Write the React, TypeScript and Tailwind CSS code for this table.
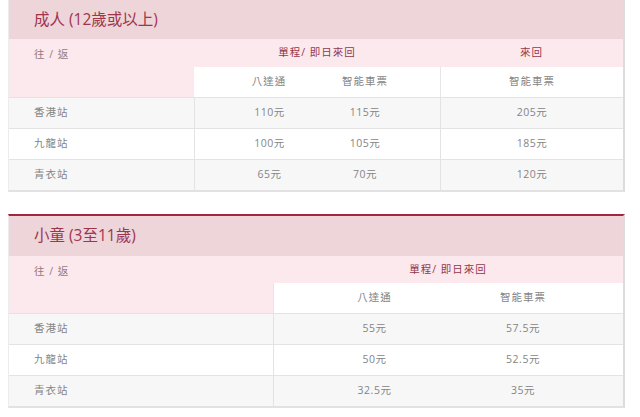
import React from 'react'

interface FareRow {
  station: string
  prices: string[]
}

const adultRows: FareRow[] = [
  { station: '香港站', prices: ['110元', '115元', '205元'] },
  { station: '九龍站', prices: ['100元', '105元', '185元'] },
  { station: '青衣站', prices: ['65元', '70元', '120元'] },
]

const childRows: FareRow[] = [
  { station: '香港站', prices: ['55元', '57.5元'] },
  { station: '九龍站', prices: ['50元', '52.5元'] },
  { station: '青衣站', prices: ['32.5元', '35元'] },
]

function Title({ text, tall }: { text: string; tall?: boolean }) {
  return (
    <div
      className={
        'bg-[#edd5da] flex items-center pl-[25px] text-[15.5px] text-[#a0344d] ' +
        (tall ? 'h-[40px]' : 'h-[39px]')
      }
    >
      {text}
    </div>
  )
}

export default function App() {
  return (
    <div className="w-[640px] h-[417px] overflow-hidden bg-white pl-2 font-['Open_Sans','Noto_Sans_CJK_TC',sans-serif]">
      {/* 成人 */}
      <div className="w-[617px] border-l border-[#ececec] border-r-2 border-b-2 border-r-[#dcdcdc] border-b-[#e2e2e2]">
        <Title text="成人 (12歲或以上)" />
        <div className="grid grid-cols-[185px_123px_123px_1fr] text-[10.5px] tracking-[1px]">
          <div className="row-span-2 bg-[#fbe9ed] pl-[25px] pt-[8px] text-[#947a80]">往 / 返</div>
          <div className="col-span-2 h-[28px] bg-[#fbe9ed] flex items-center justify-center text-[#94384e]">單程/ 即日來回</div>
          <div className="h-[28px] bg-[#fbe9ed] flex items-center justify-center text-[#94384e]">來回</div>
          <div className="h-[30px] bg-white flex items-center justify-center pl-[27px] text-[#858585]">八達通</div>
          <div className="h-[30px] bg-white flex items-center justify-center pr-[27px] text-[#858585]">智能車票</div>
          <div className="h-[30px] bg-white border-l border-[#e6e6e6] flex items-center justify-center text-[#858585]">智能車票</div>
          {adultRows.map((r, i) => (
            <React.Fragment key={r.station}>
              <div className={(i % 2 === 0 ? 'bg-[#f7f7f7] ' : 'bg-white ') + 'h-[31px] border-t border-[#e3e3e3] flex items-center pl-[25px] text-[#858585]'}>{r.station}</div>
              <div className={(i % 2 === 0 ? 'bg-[#f7f7f7] ' : 'bg-white ') + 'h-[31px] border-t border-l border-[#e3e3e3] flex items-center justify-center pl-[27px] text-[#858585] tracking-[0.5px]'}>{r.prices[0]}</div>
              <div className={(i % 2 === 0 ? 'bg-[#f7f7f7] ' : 'bg-white ') + 'h-[31px] border-t border-[#e3e3e3] flex items-center justify-center pr-[27px] text-[#858585] tracking-[0.5px]'}>{r.prices[1]}</div>
              <div className={(i % 2 === 0 ? 'bg-[#f7f7f7] ' : 'bg-white ') + 'h-[31px] border-t border-l border-[#e3e3e3] flex items-center justify-center text-[#858585] tracking-[0.5px]'}>{r.prices[2]}</div>
            </React.Fragment>
          ))}
        </div>
      </div>

      {/* 小童 */}
      <div className="mt-[22px] w-[617px] border-t-2 border-t-[#a3263f] border-l border-l-[#ececec] border-r-2 border-b-2 border-r-[#dcdcdc] border-b-[#e2e2e2]">
        <Title text="小童 (3至11歲)" tall />
        <div className="grid grid-cols-[264px_176px_1fr] text-[10.5px] tracking-[1px]">
          <div className="row-span-2 bg-[#fbe9ed] pl-[25px] pt-[8px] text-[#947a80]">往 / 返</div>
          <div className="col-span-2 h-[27px] bg-[#fbe9ed] flex items-center justify-center text-[#94384e]">單程/ 即日來回</div>
          <div className="h-[30px] bg-white border-l border-[#e6e6e6] flex items-center justify-center pl-[26px] text-[#858585]">八達通</div>
          <div className="h-[30px] bg-white flex items-center justify-center pr-[26px] text-[#858585]">智能車票</div>
          {childRows.map((r, i) => (
            <React.Fragment key={r.station}>
              <div className={(i % 2 === 0 ? 'bg-[#f7f7f7] ' : 'bg-white ') + 'h-[31px] border-t border-[#e3e3e3] flex items-center pl-[25px] text-[#858585]'}>{r.station}</div>
              <div className={(i % 2 === 0 ? 'bg-[#f7f7f7] ' : 'bg-white ') + 'h-[31px] border-t border-l border-[#e3e3e3] flex items-center justify-center pl-[26px] text-[#858585] tracking-[0.5px]'}>{r.prices[0]}</div>
              <div className={(i % 2 === 0 ? 'bg-[#f7f7f7] ' : 'bg-white ') + 'h-[31px] border-t border-[#e3e3e3] flex items-center justify-center pr-[26px] text-[#858585] tracking-[0.5px]'}>{r.prices[1]}</div>
            </React.Fragment>
          ))}
        </div>
      </div>
    </div>
  )
}
